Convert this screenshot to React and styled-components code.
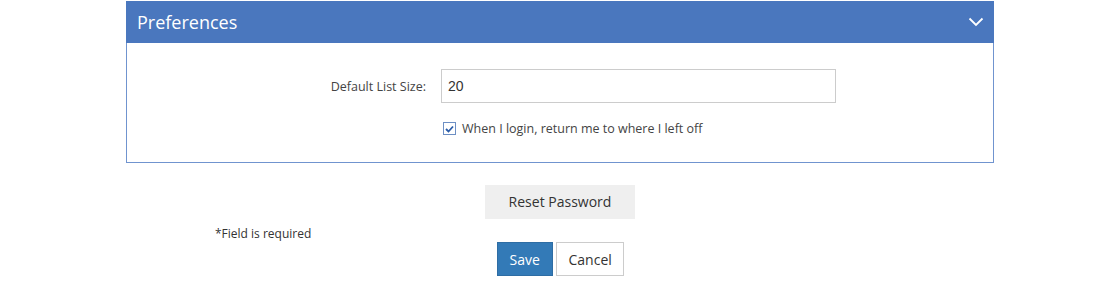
import styled, { createGlobalStyle } from "styled-components";

const GlobalStyle = createGlobalStyle`
  body {
    margin: 0;
    background: #ffffff;
    font-family: "Open Sans", "Liberation Sans", sans-serif;
    color: #333;
  }
`;

const Page = styled.div`
  width: 1120px;
  padding-top: 1px;
`;

const Panel = styled.section`
  width: 868px;
  margin: 0 auto;
`;

const PanelHeader = styled.div`
  height: 42px;
  background: #4a77be;
  display: flex;
  align-items: center;
  justify-content: space-between;
  padding: 0 10px 0 11px;
  box-sizing: border-box;
`;

const PanelTitle = styled.h2`
  margin: 0;
  font-size: 18px;
  font-weight: 400;
  color: #ffffff;
  line-height: 1;
  padding-bottom: 1px;
`;

const Body = styled.div`
  border: 1px solid #7094cf;
  border-top: none;
  padding: 26px 0 25px;
`;

const FormRow = styled.div`
  display: grid;
  grid-template-columns: 299px 395px;
  column-gap: 15px;
  align-items: center;
`;

const Label = styled.label`
  text-align: right;
  font-size: 12.5px;
  color: #444;
`;

const TextInput = styled.input`
  box-sizing: border-box;
  width: 395px;
  height: 34px;
  border: 1px solid #cccccc;
  padding: 0 6px;
  font-family: "Liberation Sans", Arial, sans-serif;
  font-size: 14px;
  color: #333;
  outline: none;
`;

const CheckRow = styled.label`
  display: flex;
  align-items: center;
  gap: 6px;
  margin: 17px 0 0 316px;
  font-size: 12.5px;
  color: #444;
`;

const CheckBox = styled.span`
  width: 11px;
  height: 11px;
  border: 1px solid #6d8fc4;
  background: #fff;
  display: inline-flex;
  align-items: center;
  justify-content: center;
`;

const ResetButton = styled.button`
  display: block;
  margin: 22px auto 0;
  width: 150px;
  height: 34px;
  padding: 0 0 1px;
  border: none;
  background: #efefef;
  font-family: "Open Sans", "Liberation Sans", sans-serif;
  font-size: 14px;
  color: #333;
`;

const Footer = styled.div`
  width: 868px;
  margin: 6px auto 0;
`;

const Required = styled.div`
  padding-left: 89px;
  font-size: 12px;
  line-height: 17px;
  color: #333;
`;

const Actions = styled.div`
  display: flex;
  justify-content: center;
  gap: 3px;
`;

const Button = styled.button`
  height: 34px;
  padding: 0 12px;
  font-family: "Open Sans", "Liberation Sans", sans-serif;
  font-size: 14px;
  border: 1px solid ${(p) => (p.$primary ? "#2e6da4" : "#cccccc")};
  background: ${(p) => (p.$primary ? "#337ab7" : "#ffffff")};
  color: ${(p) => (p.$primary ? "#ffffff" : "#333333")};
  width: ${(p) => p.$width}px;
`;

export default function App() {
  return (
    <Page>
      <GlobalStyle />
      <Panel>
        <PanelHeader>
          <PanelTitle>Preferences</PanelTitle>
          <svg width="16" height="10" viewBox="0 0 16 10">
            <polyline
              points="1.5,1.5 8,8 14.5,1.5"
              fill="none"
              stroke="#ffffff"
              strokeWidth="1.8"
            />
          </svg>
        </PanelHeader>
        <Body>
          <FormRow>
            <Label htmlFor="list-size">Default List Size:</Label>
            <TextInput id="list-size" defaultValue="20" />
          </FormRow>
          <CheckRow>
            <CheckBox>
              <svg width="9" height="8" viewBox="0 0 9 8">
                <polyline
                  points="1,4 3.5,6.5 8,1.5"
                  fill="none"
                  stroke="#2b5ca8"
                  strokeWidth="1.8"
                />
              </svg>
            </CheckBox>
            When I login, return me to where I left off
          </CheckRow>
        </Body>
      </Panel>
      <ResetButton>Reset Password</ResetButton>
      <Footer>
        <Required>*Field is required</Required>
        <Actions>
          <Button $primary $width={56}>Save</Button>
          <Button $width={68}>Cancel</Button>
        </Actions>
      </Footer>
    </Page>
  );
}
